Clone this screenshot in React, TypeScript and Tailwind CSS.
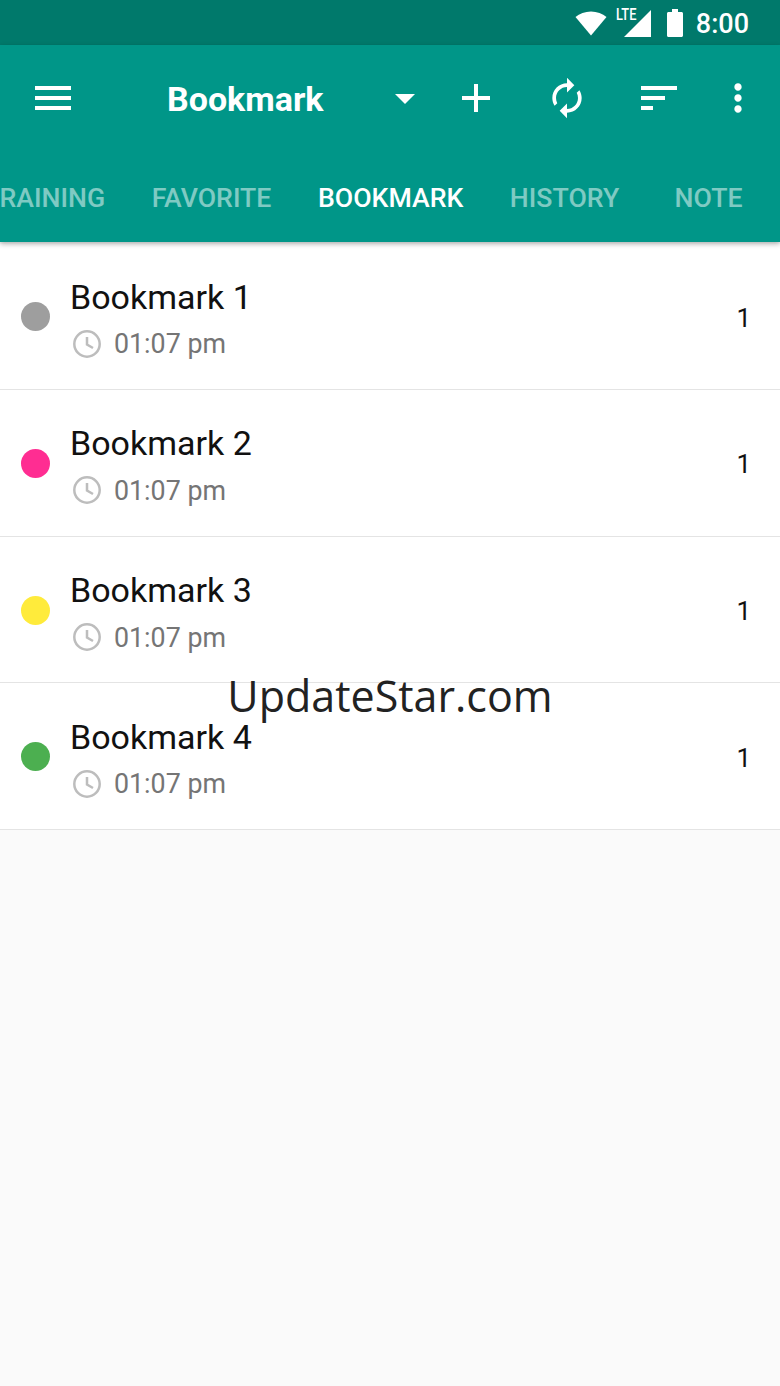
import React from 'react';

const rows = [
  { name: 'Bookmark 1', dot: 'bg-[#9e9e9e]' },
  { name: 'Bookmark 2', dot: 'bg-[#ff2d92]' },
  { name: 'Bookmark 3', dot: 'bg-[#ffeb3b]' },
  { name: 'Bookmark 4', dot: 'bg-[#4caf50]' },
];

const tabs = [
  { label: 'TRAINING', className: '-ml-[40px] px-[23.250px] text-white/50' },
  { label: 'FAVORITE', className: 'px-[23.250px] text-white/50' },
  { label: 'BOOKMARK', className: 'px-[23.250px] text-white' },
  { label: 'HISTORY', className: 'px-[23.250px] text-white/50' },
  { label: 'NOTE', className: 'w-[132px] text-center text-white/50' },
];

function Icon({ d, className }: { d: string; className: string }) {
  return (
    <svg viewBox="0 0 24 24" fill="currentColor" className={className}>
      <path d={d} />
    </svg>
  );
}

function StatusBar() {
  return (
    <div className="flex h-[45px] items-center justify-end bg-[#00796b] text-white">
      <svg viewBox="0 0 32 25" fill="currentColor" className="mt-[2px] h-[25px] w-[32px]">
        <path d="M16 24.5 L0.5 6 C4.5 2.6 10 0.5 16 0.5 C22 0.5 27.5 2.6 31.500 6 Z" />
      </svg>
      <div className="relative ml-[9px] h-[28px] w-[35px]">
        <span className="absolute -top-[2px] left-0 origin-top-left scale-x-[0.8] font-['Roboto'] text-[16px] leading-[16px] font-medium">LTE</span>
        <svg viewBox="0 0 27 27" fill="currentColor" className="absolute right-0 top-[1px] h-[27px] w-[27px]">
          <path d="M0 27 L27 0 V27 Z" />
        </svg>
      </div>
      <svg viewBox="0 0 16 28" fill="currentColor" className="ml-[16px] h-[28px] w-[16px]">
        <path d="M5 0 H11 V3 H14.500 C15.300 3 16 3.700 16 4.500 V26.500 C16 27.300 15.300 28 14.500 28 H1.500 C0.700 28 0 27.300 0 26.500 V4.500 C0 3.700 0.700 3 1.500 3 H5 Z" />
      </svg>
      <span className="ml-[13px] mr-[31px] mt-[4px] font-['Roboto'] text-[27px] font-medium leading-none">8:00</span>
    </div>
  );
}

function Toolbar() {
  return (
    <div className="flex h-[106px] items-center text-white">
      <Icon
        d="M3 18h18v-2H3v2zm0-5h18v-2H3v2zm0-7v2h18V6H3z"
        className="ml-[29px] h-[48px] w-[48px]"
      />
      <span className="ml-[90px] mt-[2px] w-[205px] font-['Roboto'] text-[34px] font-bold leading-none">Bookmark</span>
      <Icon d="M7 10l5 5 5-5z" className="ml-[9px] h-[48px] w-[48px]" />
      <Icon d="M19 13h-6v6h-2v-6H5v-2h6V5h2v6h6v2z" className="ml-[23px] h-[48px] w-[48px]" />
      <Icon
        d="M12 6v3l4-4-4-4v3c-4.420 0-8 3.580-8 8 0 1.570.46 3.030 1.240 4.260L6.700 14.800c-.45-.83-.7-1.790-.7-2.800 0-3.310 2.690-6 6-6zm6.760 1.740L17.300 9.200c.44.84.7 1.790.7 2.800 0 3.310-2.690 6-6 6v-3l-4 4 4 4v-3c4.420 0 8-3.580 8-8 0-1.570-.46-3.030-1.240-4.260z"
        className="ml-[45px] h-[44px] w-[44px]"
      />
      <Icon d="M3 18h6v-2H3v2zM3 6v2h18V6H3zm0 7h12v-2H3v2z" className="ml-[46px] h-[48px] w-[48px]" />
      <Icon
        d="M12 8c1.100 0 2-.9 2-2s-.9-2-2-2-2 .9-2 2 .9 2 2 2zm0 2c-1.100 0-2 .9-2 2s.9 2 2 2 2-.9 2-2-.9-2-2-2zm0 6c-1.100 0-2 .9-2 2s.9 2 2 2 2-.9 2-2-.9-2-2-2z"
        className="ml-[33px] h-[44px] w-[44px]"
      />
    </div>
  );
}

function Tabs() {
  return (
    <div className="flex h-[91px] items-start overflow-hidden pt-[31px] font-['Roboto'] text-[26.700px] font-medium leading-[32px] whitespace-nowrap">
      {tabs.map((tab) => (
        <div key={tab.label} className={`shrink-0 ${tab.className}`}>
          {tab.label}
        </div>
      ))}
    </div>
  );
}

function Row({ name, dot }: { name: string; dot: string }) {
  return (
    <div className="flex h-[146.670px] items-center border-b border-[#e4e4e4] bg-white pt-[1px]">
      <div className={`ml-[21px] h-[29px] w-[29px] shrink-0 rounded-full ${dot}`} />
      <div className="ml-[20px] mt-[8px] flex-1">
        <div className="text-[34px] leading-[38px] text-[#111111]">{name}</div>
        <div className="mt-[10px] flex h-[38px] items-center">
          <svg viewBox="0 0 28 28" fill="none" stroke="#bdbdbd" strokeWidth="2.500" className="-mt-[2px] ml-[3px] h-[28px] w-[28px]">
            <circle cx="14" cy="14" r="12.700" />
            <path d="M14 7 V14.500 L20 18" />
          </svg>
          <span className="ml-[13px] text-[26.800px] leading-none text-[#757575]">01:07 pm</span>
        </div>
      </div>
      <span className="mr-[29px] mt-[2px] text-[26px] leading-none text-[#111111]">1</span>
    </div>
  );
}

export default function App() {
  return (
    <div className="relative flex h-[1386px] w-[780px] flex-col overflow-hidden bg-[#fafafa] font-['Roboto',sans-serif]">
      <StatusBar />
      <div className="relative z-10 bg-[#009688] shadow-[0_2px_5px_rgba(0,0,0,0.3)]">
        <Toolbar />
        <Tabs />
      </div>
      <div className="pt-[1.500px]">
        {rows.map((row) => (
          <Row key={row.name} name={row.name} dot={row.dot} />
        ))}
      </div>
      {/* watermark sits on top of the list */}
      <div className="absolute left-0 right-0 top-[668px] text-center font-['Open_Sans',sans-serif] text-[43px] leading-[56px] text-[#222222]">
        UpdateStar.com
      </div>
    </div>
  );
}
